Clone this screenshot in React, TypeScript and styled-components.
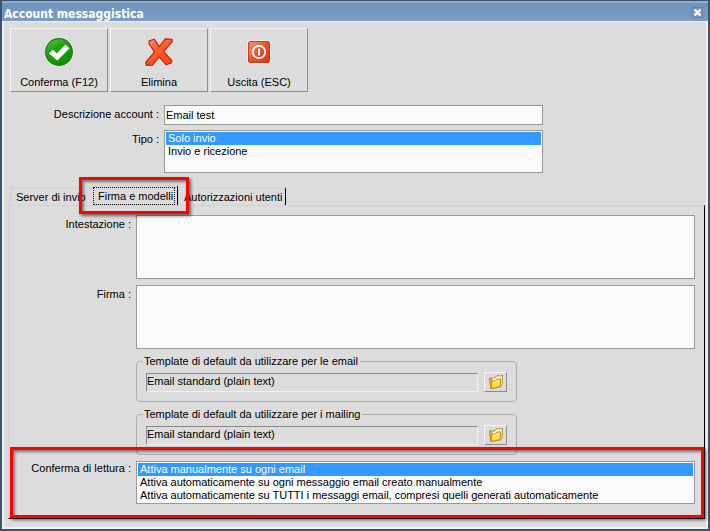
import React, { useId, useState } from "react";
import styled, { createGlobalStyle } from "styled-components";

const GlobalStyle = createGlobalStyle`
  *, *::before, *::after { box-sizing: border-box; }
  body { margin: 0; background: #dcdcdc; }
  body, button, input, select, textarea {
    font-family: Tahoma, "Liberation Sans", sans-serif;
    font-size: 11px;
    line-height: 13px;
    color: #000;
  }
`;

const Window = styled.main`
  display: flex;
  flex-direction: column;
  min-height: 100vh;
  border: 2px solid #3c536d;
  border-top-width: 1px;
  background: #dcdcdc;
`;

const TitleBar = styled.header`
  display: flex;
  align-items: center;
  justify-content: space-between;
  height: 20px;
  padding: 4px 5px 0 2px;
  border-top: 2px solid #8fadd0;
  background: linear-gradient(#6f93bc, #7c9dc4);
`;

const Title = styled.h1`
  margin: 0;
  font-family: "DejaVu Sans Condensed", "DejaVu Sans", sans-serif;
  font-stretch: condensed;
  font-size: 12px;
  line-height: 16px;
  font-weight: bold;
  color: #fff;
`;

const CloseButton = styled.button`
  display: flex;
  align-items: center;
  justify-content: center;
  width: 11px;
  height: 11px;
  margin-bottom: 4px;
  padding: 0;
  border: 1px solid #5f83ab;
  background: #7598c0;
`;

const Content = styled.div`
  flex: 1;
  display: flex;
  flex-direction: column;
  padding: 6px 1px 8px 4px;
  border: 2px solid #efefef;
  border-top-width: 1px;
`;

const Toolbar = styled.div`
  display: flex;
  gap: 2px;
  padding-left: 2px;
`;

const ToolButton = styled.button`
  display: flex;
  flex-direction: column;
  align-items: center;
  justify-content: space-between;
  width: 98px;
  height: 64px;
  padding: 7px 0 2px;
  border: 1px solid;
  border-color: #f6f6f6 #8c8c8c #8c8c8c #f6f6f6;
  background: #dcdcdc;
`;

const Form = styled.div`
  display: flex;
  flex-direction: column;
  gap: 5px;
  padding: 13px 162px 0 0;
`;

const Row = styled.div`
  display: flex;
  align-items: flex-start;
`;

const Label = styled.label<{ $width: number; $top: number }>`
  flex: none;
  width: ${(p) => p.$width}px;
  padding: ${(p) => p.$top}px 5px 0 0;
  text-align: right;
`;

const TextInput = styled.input`
  flex: 1;
  min-width: 0;
  height: 20px;
  padding: 0 1px;
  border: 1px solid #999;
  background: #fafafa;
`;

const ListBox = styled.select<{ $height: number }>`
  flex: 1;
  min-width: 0;
  height: ${(p) => p.$height}px;
  padding: 0;
  border: 1px solid #999;
  border-radius: 0;
  background: #fafafa;
  overflow: hidden;
  outline: none;

  option {
    min-height: 13px;
    height: 13px;
    margin: 0 1px;
    padding: 0 1px 0 2px;
    line-height: 13px;
  }
  option:first-child {
    margin-top: 1px;
  }
  option:checked {
    background: linear-gradient(#3399ff, #3399ff);
    -webkit-text-fill-color: #fff;
  }
`;

const TextArea = styled.textarea`
  flex: 1;
  min-width: 0;
  height: 64px;
  padding: 2px;
  border: 1px solid #999;
  background: #fafafa;
  resize: none;
`;

const TabList = styled.div`
  display: flex;
  align-items: flex-end;
  margin-top: 12px;
  padding-left: 2px;
`;

const TabSlot = styled.div`
  position: relative;
`;

const Tab = styled.button<{ $width: number; $active: boolean; $edge: boolean }>`
  display: block;
  width: ${(p) => p.$width}px;
  height: ${(p) => (p.$active ? 20 : 18)}px;
  padding: ${(p) => (p.$active ? "1px 2px" : "2px 2px 0 5px")};
  border: 1px solid #cfd2dc;
  border-bottom: 0;
  border-right: ${(p) => (p.$edge ? "1px solid #000" : "0")};
  border-radius: 3px 2px 0 0;
  background: #dcdcdc;
  text-align: left;
  white-space: nowrap;
`;

const FocusText = styled.span`
  display: block;
  padding: 2px 4px 1px 4px;
  border: 1px dotted #000;
`;

const Highlight = styled.span<{ $inset: string }>`
  position: absolute;
  inset: ${(p) => p.$inset};
  z-index: 2;
  border: 3px solid #f00;
  box-shadow: 2px 2px 3px rgba(0, 0, 0, 0.55), inset 2px 2px 3px rgba(0, 0, 0, 0.45);
  pointer-events: none;
`;

const Panel = styled.section`
  flex: 1;
  display: flex;
  flex-direction: column;
  gap: 6px;
  padding: 9px 9px 12px 0;
  border: 1px solid;
  border-color: #cfd2dc #000 #000 #cfd2dc;
`;

const Groups = styled.div`
  display: flex;
  flex-direction: column;
  gap: 6px;
  width: 381px;
  margin-left: 127px;
`;

const Group = styled.fieldset`
  display: flex;
  align-items: center;
  gap: 6px;
  min-width: 0;
  margin: 0;
  padding: 4px 9px 9px;
  border: 1px solid #adadad;
  border-radius: 4px;
`;

const Legend = styled.legend`
  padding: 0 2px 0 1px;
  margin-left: -3px;
`;

const ReadOnlyInput = styled.input`
  flex: 1;
  min-width: 0;
  height: 19px;
  padding: 0 0 2px;
  border: 1px solid;
  border-color: #888 #f0f0f0 #f0f0f0 #888;
  background: #dcdcdc;
`;

const BrowseButton = styled.button`
  display: flex;
  align-items: center;
  justify-content: center;
  width: 23px;
  height: 20px;
  padding: 0;
  border: 1px solid;
  border-color: #f6f6f6 #8c8c8c #8c8c8c #f6f6f6;
  background: #dcdcdc;
`;

const ConfirmRow = styled(Row)`
  position: relative;
`;

const CheckIcon = () => (
  <svg width="32" height="32" viewBox="0 0 32 32" aria-hidden="true">
    <defs>
      <linearGradient id="green" x1="0" y1="0" x2="0.5" y2="1">
        <stop offset="0" stopColor="#5dc94b" />
        <stop offset="0.45" stopColor="#22a012" />
        <stop offset="1" stopColor="#0a9400" />
      </linearGradient>
    </defs>
    <circle cx="16" cy="16" r="13.3" fill="url(#green)" stroke="#157a16" strokeWidth="1.2" />
    <path d="M6.4 17.4 10.2 14.2 13.8 18 22.4 9 26 12.4 14.3 24.2Z" fill="#fff" stroke="#fff" strokeWidth="0.8" strokeLinejoin="round" />
  </svg>
);

const DeleteIcon = () => (
  <svg width="32" height="32" viewBox="0 0 32 32" aria-hidden="true">
    <defs>
      <linearGradient id="cross" x1="0" y1="0" x2="0.6" y2="1">
        <stop offset="0" stopColor="#ff9670" />
        <stop offset="0.5" stopColor="#ff5a2b" />
        <stop offset="1" stopColor="#f04a1c" />
      </linearGradient>
    </defs>
    <path
      d="M6.2 4.8 11.2 3.2 16.2 10.8 22.3 2.8 29 3.3 29.2 5.6 20.6 15.6 28.8 24.4 28.2 27 23.2 28.8 16.2 20.8 9.4 29.2 3.4 29.4 2.7 26.4 11.6 15.8 6 8Z"
      fill="url(#cross)"
      stroke="#b8250c"
      strokeWidth="1.2"
      strokeLinejoin="round"
    />
  </svg>
);

const PowerIcon = () => (
  <svg width="32" height="32" viewBox="0 0 32 32" aria-hidden="true">
    <defs>
      <linearGradient id="power" x1="0" y1="0" x2="1" y2="1">
        <stop offset="0" stopColor="#f39a80" />
        <stop offset="0.5" stopColor="#e8522d" />
        <stop offset="1" stopColor="#d83209" />
      </linearGradient>
    </defs>
    <rect x="4.5" y="4.5" width="23" height="23" rx="2" fill="#fff" />
    <rect x="5.5" y="5.5" width="21" height="21" rx="1.5" fill="url(#power)" stroke="#cc3a16" />
    <circle cx="16" cy="16" r="6.2" fill="none" stroke="#fff" strokeWidth="1.8" />
    <path d="M16 12.8v6.4" stroke="#fff" strokeWidth="2" />
  </svg>
);

const FolderIcon = () => (
  <svg width="16" height="16" viewBox="0 0 16 16" aria-hidden="true">
    <path d="M1.5 4.2 7 4 8 2.2 11 1.6 11.6 2.2 14.5 1.4 14 10.5 12.2 13 3 14.5Z" fill="#fffbe0" stroke="#c08c1c" strokeLinejoin="round" />
    <path d="M1.5 4.2 3.4 4.4 4.6 7.6 3 14.5Z" fill="#f0bd38" stroke="#c08c1c" strokeLinejoin="round" />
    <path d="M3.8 7.4 7.6 6.8 8.8 5.2 12.6 4.8 12.2 12.6 3 14.5Z" fill="#fde04a" stroke="#c08c1c" strokeLinejoin="round" />
    <path d="M5.2 8.6 11.4 6.6" stroke="#fff8b8" />
  </svg>
);

const CloseIcon = () => (
  <svg width="9" height="9" viewBox="0 0 9 9" aria-hidden="true">
    <path d="M1.5 1.5 7.5 7.5M7.5 1.5 1.5 7.5" stroke="#fff" strokeWidth="2.4" />
  </svg>
);

function TemplateGroup({ legend }: { legend: string }) {
  return (
    <Group>
      <Legend>{legend}</Legend>
      <ReadOnlyInput readOnly aria-label={legend} defaultValue="Email standard (plain text)" />
      <BrowseButton type="button" aria-label="Sfoglia">
        <FolderIcon />
      </BrowseButton>
    </Group>
  );
}

const tabs = [
  { name: "Server di invio", width: 80, edge: false },
  { name: "Firma e modelli", width: 88, edge: true },
  { name: "Autorizzazioni utenti", width: 108, edge: true },
];

export default function App() {
  const id = useId();
  const [active, setActive] = useState(1);
  return (
    <>
      <GlobalStyle />
      <Window>
        <TitleBar>
          <Title>Account messaggistica</Title>
          <CloseButton type="button" aria-label="Chiudi">
            <CloseIcon />
          </CloseButton>
        </TitleBar>
        <Content>
          <Toolbar>
            <ToolButton type="button"><CheckIcon />Conferma (F12)</ToolButton>
            <ToolButton type="button"><DeleteIcon />Elimina</ToolButton>
            <ToolButton type="button"><PowerIcon />Uscita (ESC)</ToolButton>
          </Toolbar>
          <Form>
            <Row>
              <Label $width={156} $top={3} htmlFor={id + "name"}>Descrizione account :</Label>
              <TextInput id={id + "name"} defaultValue="Email test" />
            </Row>
            <Row>
              <Label $width={156} $top={3} htmlFor={id + "type"}>Tipo :</Label>
              <ListBox id={id + "type"} size={3} $height={43} defaultValue="send">
                <option value="send">Solo invio</option>
                <option value="both">Invio e ricezione</option>
              </ListBox>
            </Row>
          </Form>
          <TabList role="tablist">
            {tabs.map((tab, i) => (
              <TabSlot key={tab.name}>
                <Tab
                  type="button"
                  role="tab"
                  aria-selected={active === i}
                  $active={active === i}
                  $width={tab.width}
                  $edge={tab.edge}
                  onClick={() => setActive(i)}
                >
                  {active === i ? <FocusText>{tab.name}</FocusText> : tab.name}
                </Tab>
                {i === 1 && <Highlight $inset="-8px -11px -9px -11px" />}
              </TabSlot>
            ))}
          </TabList>
          <Panel role="tabpanel">
            <Row>
              <Label $width={127} $top={3} htmlFor={id + "head"}>Intestazione :</Label>
              <TextArea id={id + "head"} />
            </Row>
            <Row>
              <Label $width={127} $top={3} htmlFor={id + "sign"}>Firma :</Label>
              <TextArea id={id + "sign"} />
            </Row>
            <Groups>
              <TemplateGroup legend="Template di default da utilizzare per le email" />
              <TemplateGroup legend="Template di default da utilizzare per i mailing" />
            </Groups>
            <ConfirmRow>
              <Label $width={127} $top={1} htmlFor={id + "read"}>Conferma di lettura :</Label>
              <ListBox id={id + "read"} size={3} $height={43} defaultValue="manual">
                <option value="manual">Attiva manualmente su ogni email</option>
                <option value="each">Attiva automaticamente su ogni messaggio email creato manualmente</option>
                <option value="all">Attiva automaticamente su TUTTI i messaggi email, compresi quelli generati automaticamente</option>
              </ListBox>
              <Highlight $inset="-14px -9px -14px 1px" />
            </ConfirmRow>
          </Panel>
        </Content>
      </Window>
    </>
  );
}
